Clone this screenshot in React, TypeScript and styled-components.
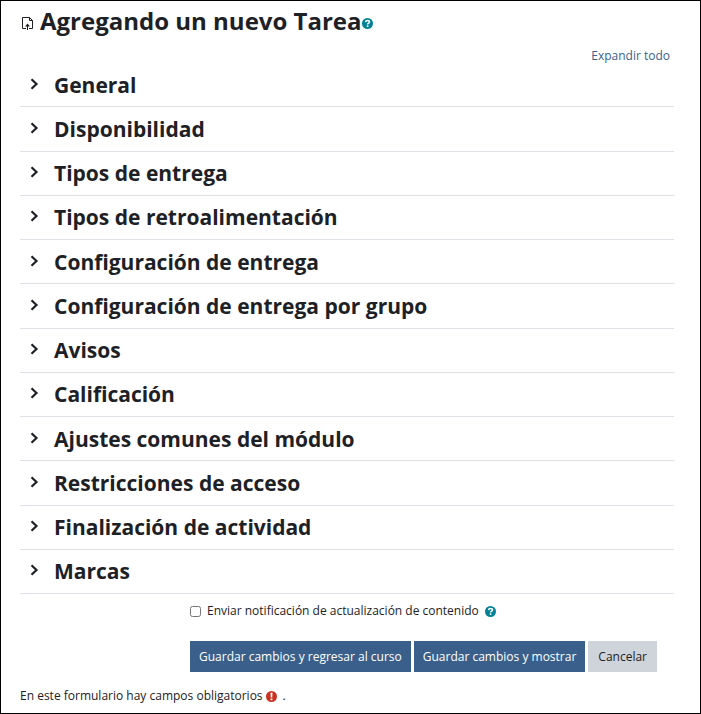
import React from "react";
import styled, { createGlobalStyle } from "styled-components";

const GlobalStyle = createGlobalStyle`
  *, *::before, *::after { box-sizing: border-box; }
  body {
    margin: 0;
    background: #fff;
    color: #1d2125;
    font-family: "Open Sans", "Noto Sans", sans-serif;
    font-size: 12px;
    line-height: 20px;
  }
`;

const Page = styled.main`
  display: flex;
  flex-direction: column;
  min-height: 100vh;
  padding: 4px 26px 7px 19px;
  border: 1px solid #000;
`;

const TitleBar = styled.header`
  display: flex;
  align-items: center;
  height: 32px;
`;

const Title = styled.h2`
  margin: 0 0 0 6px;
  font-size: 24px;
  line-height: 32px;
  font-weight: 700;
  white-space: nowrap;
`;

const HelpButton = styled.button`
  display: inline-flex;
  padding: 0;
  border: 0;
  background: none;
  color: #008196;
  cursor: pointer;
`;

const TitleHelp = styled(HelpButton)`
  margin-top: 4px;
`;

const FileIcon = styled.svg`
  flex: none;
  margin: 4px 0 0 2px;
`;

const ExpandRow = styled.div`
  display: flex;
  justify-content: flex-end;
  padding: 9px 4px 0 0;
`;

const ExpandLink = styled.a`
  color: #3a5f8a;
  text-decoration: none;
`;

const SectionList = styled.div`
  display: flex;
  flex: 1;
  flex-direction: column;
  margin-top: -3px;
`;

const Section = styled.section`
  display: flex;
  flex: 1 0 44px;
  align-items: center;
  border-bottom: 1px solid #dee2e6;
`;

const SectionToggle = styled.button`
  display: flex;
  align-items: center;
  padding: 0;
  margin-left: 10px;
  border: 0;
  background: none;
  color: #1d2125;
  font: inherit;
  cursor: pointer;
`;

const SectionTitle = styled.h3`
  margin: 0;
  font-size: 21px;
  line-height: 30px;
  font-weight: 700;
`;

const Chevron = styled.svg`
  flex: none;
  margin: 0 15px 2px 0;
`;

const FormFooter = styled.div`
  padding-left: 170px;
`;

const CheckRow = styled.div`
  display: flex;
  align-items: center;
  height: 20px;
  margin: 7px 0 20px;
`;

const CheckLabel = styled.label`
  display: flex;
  align-items: center;
  gap: 6px;
  margin-right: 6px;
`;

const Checkbox = styled.input`
  width: 11px;
  height: 11px;
  margin: 0;
`;

const Buttons = styled.div`
  display: flex;
  gap: 3px;
`;

const Button = styled.button<{ $secondary?: boolean }>`
  height: 31px;
  padding: 0 ${(p) => (p.$secondary ? 10 : 9)}px;
  border: 0;
  background: ${(p) => (p.$secondary ? "#ced4da" : "#3a5f8a")};
  color: ${(p) => (p.$secondary ? "#1d2125" : "#fff")};
  font: inherit;
  white-space: nowrap;
  cursor: pointer;
`;

const RequiredNote = styled.div`
  display: flex;
  align-items: center;
  gap: 3px;
  margin-top: 14px;
`;

const RequiredIcon = styled.svg`
  margin-right: 3px;
  color: #ca3120;
`;

const HelpIcon = () => (
  <svg width="11" height="11" viewBox="0 0 12 12" aria-hidden="true">
    <circle cx="6" cy="6" r="6" fill="currentColor" />
    <path d="M3.9 4.5C4 3.3 4.8 2.7 6 2.7s2.2.7 2.2 1.7C8.2 5.6 6.1 5.6 6.1 7" fill="none" stroke="#fff" strokeWidth="1.7" />
    <path d="M5.2 8h1.8v1.7H5.2z" fill="#fff" />
  </svg>
);

const sections = [
  "General",
  "Disponibilidad",
  "Tipos de entrega",
  "Tipos de retroalimentación",
  "Configuración de entrega",
  "Configuración de entrega por grupo",
  "Avisos",
  "Calificación",
  "Ajustes comunes del módulo",
  "Restricciones de acceso",
  "Finalización de actividad",
  "Marcas",
];

export default function App() {
  return (
    <>
      <GlobalStyle />
      <Page>
        <TitleBar>
          <FileIcon width="12" height="13" viewBox="0 0 12 13" fill="none" stroke="#1d2125" aria-hidden="true">
            <path d="M4 11.5H.5V.5h7l3 3v8H7" />
            <path d="M7.5 .5v3h3" />
            <path d="M5.5 13V8" />
            <path d="M3 9.5h5L5.5 6.5z" fill="#1d2125" stroke="none" />
          </FileIcon>
          <Title>Agregando un nuevo Tarea</Title>
          <TitleHelp type="button" aria-label="Ayuda con Tarea">
            <HelpIcon />
          </TitleHelp>
        </TitleBar>
        <ExpandRow>
          <ExpandLink href="#secciones">Expandir todo</ExpandLink>
        </ExpandRow>
        <SectionList id="secciones">
          {sections.map((name) => (
            <Section key={name}>
              <SectionToggle type="button" aria-expanded="false">
                <Chevron width="9" height="12" viewBox="0 0 9 12" fill="none" stroke="currentColor" strokeWidth="2.2" aria-hidden="true">
                  <path d="M1.5 1.2 6.5 6l-5 4.8" />
                </Chevron>
                <SectionTitle>{name}</SectionTitle>
              </SectionToggle>
            </Section>
          ))}
        </SectionList>
        <FormFooter>
          <CheckRow>
            <CheckLabel>
              <Checkbox type="checkbox" />
              Enviar notificación de actualización de contenido
            </CheckLabel>
            <HelpButton type="button" aria-label="Ayuda con la notificación">
              <HelpIcon />
            </HelpButton>
          </CheckRow>
          <Buttons>
            <Button type="submit">Guardar cambios y regresar al curso</Button>
            <Button type="submit">Guardar cambios y mostrar</Button>
            <Button type="button" $secondary>Cancelar</Button>
          </Buttons>
        </FormFooter>
        <RequiredNote>
          En este formulario hay campos obligatorios
          <RequiredIcon width="11" height="11" viewBox="0 0 12 12" role="img" aria-label="Campo obligatorio">
            <circle cx="6" cy="6" r="6" fill="currentColor" />
            <path d="M4.9 1.8h2.2L6.8 7.2H5.2zM5 8.2h2v2H5z" fill="#fff" />
          </RequiredIcon>
          <span>.</span>
        </RequiredNote>
      </Page>
    </>
  );
}
